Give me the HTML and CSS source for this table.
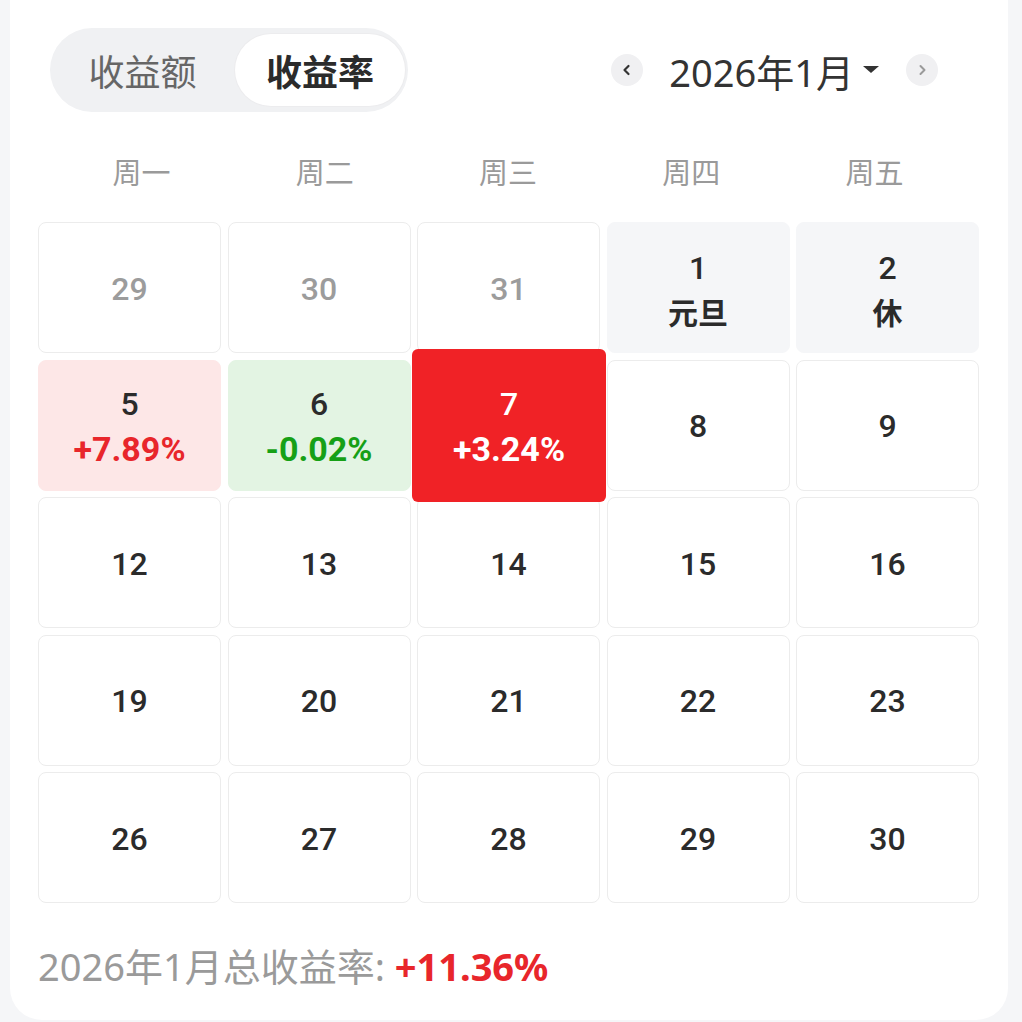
FILE: index.html
```html
<!DOCTYPE html>
<html lang="zh-CN">
<head>
<meta charset="utf-8">
<title>收益日历</title>
<link rel="stylesheet" href="styles.css">
</head>
<body>
<div class="card">
  <div class="header">
    <div class="toggle">
      <div class="seg">收益额</div>
      <div class="seg active">收益率</div>
    </div>
    <div class="nav">
      <div class="circle">
        <svg width="14" height="14" viewBox="0 0 14 14"><path d="M8.5 3 L4.5 7 L8.5 11" fill="none" stroke="#333" stroke-width="2.2" stroke-linecap="round" stroke-linejoin="round"/></svg>
      </div>
      <div class="title">2026年1月</div>
      <svg class="caret" width="16" height="8" viewBox="0 0 16 8"><path d="M0 0 H16 L8 7 Z" fill="#333"/></svg>
      <div class="circle next">
        <svg width="14" height="14" viewBox="0 0 14 14"><path d="M5.5 3 L9.5 7 L5.5 11" fill="none" stroke="#9a9a9a" stroke-width="2" stroke-linecap="round" stroke-linejoin="round"/></svg>
      </div>
    </div>
  </div>

  <div class="weekdays">
    <div>周一</div><div>周二</div><div>周三</div><div>周四</div><div>周五</div>
  </div>

  <div class="grid">
    <div class="cell muted"><span class="d">29</span></div>
    <div class="cell muted"><span class="d">30</span></div>
    <div class="cell muted"><span class="d">31</span></div>
    <div class="cell holiday"><span class="d">1</span><span class="sub">元旦</span></div>
    <div class="cell holiday"><span class="d">2</span><span class="sub">休</span></div>

    <div class="cell up"><span class="d">5</span><span class="pct red">+7.89%</span></div>
    <div class="cell down"><span class="d">6</span><span class="pct green">-0.02%</span></div>
    <div class="cell selected">
      <div class="hl"><span class="d">7</span><span class="pct">+3.24%</span></div>
    </div>
    <div class="cell"><span class="d">8</span></div>
    <div class="cell"><span class="d">9</span></div>

    <div class="cell"><span class="d">12</span></div>
    <div class="cell"><span class="d">13</span></div>
    <div class="cell"><span class="d">14</span></div>
    <div class="cell"><span class="d">15</span></div>
    <div class="cell"><span class="d">16</span></div>

    <div class="cell"><span class="d">19</span></div>
    <div class="cell"><span class="d">20</span></div>
    <div class="cell"><span class="d">21</span></div>
    <div class="cell"><span class="d">22</span></div>
    <div class="cell"><span class="d">23</span></div>

    <div class="cell"><span class="d">26</span></div>
    <div class="cell"><span class="d">27</span></div>
    <div class="cell"><span class="d">28</span></div>
    <div class="cell"><span class="d">29</span></div>
    <div class="cell"><span class="d">30</span></div>
  </div>

  <div class="footer">2026年1月总收益率: <span class="total">+11.36%</span></div>
</div>
</body>
</html>
```

FILE: styles.css
```css
html, body {
  margin: 0;
  padding: 0;
  background: #f5f6f8;
}
body {
  font-family: Roboto, "Noto Sans CJK SC", sans-serif;
  color: #333;
}
.card {
  background: #fff;
  margin: 0 14px 0 10px;
  padding: 28px 29px 29px 28px;
  border-radius: 0 0 32px 32px;
}
.header {
  display: flex;
  align-items: center;
  justify-content: space-between;
  padding: 0 41px 0 12px;
}
.toggle {
  display: flex;
  align-items: center;
  background: #f0f1f3;
  border-radius: 42px;
  padding: 6px 3px 6px 0;
  height: 72px;
}
.seg {
  height: 72px;
  display: flex;
  align-items: center;
  justify-content: center;
  font-family: "Noto Sans CJK SC", sans-serif;
  font-size: 36px;
  color: #666;
  width: 185px;
}
.seg.active {
  width: 170px;
  background: #fff;
  border-radius: 37px;
  color: #2b2b2b;
  font-weight: 700;
  box-shadow: 0 0 0 1px #ececee;
}
.nav {
  display: flex;
  align-items: center;
}
.circle {
  width: 32px;
  height: 32px;
  border-radius: 50%;
  background: #f0f0f2;
  display: flex;
  align-items: center;
  justify-content: center;
}
.title {
  margin-left: 26px;
  font-size: 38px;
  color: #333;
  font-family: "Noto Sans", "Noto Sans CJK SC", sans-serif;
}
.caret {
  margin-left: 9px;
}
.next {
  margin-left: 27px;
}
.weekdays {
  display: grid;
  grid-template-columns: repeat(5, 1fr);
  padding: 0 13px 0 12px;
  margin-top: 37px;
  line-height: 44px;
  text-align: center;
  font-family: "Noto Sans CJK SC", sans-serif;
  font-size: 29px;
  color: #9a9a9a;
}
.grid {
  margin-top: 29px;
  display: grid;
  grid-template-columns: repeat(5, 1fr);
  grid-auto-rows: 131px;
  gap: 6.5px;
}
.cell {
  border: 1px solid #ececec;
  border-radius: 8px;
  display: flex;
  flex-direction: column;
  align-items: center;
  justify-content: center;
  padding-top: 3px;
  box-sizing: border-box;
  font-size: 32px;
  font-weight: 500;
  line-height: 45px;
  color: #2b2b2b;
}
.cell.muted { color: #9c9c9c; }
.cell.holiday {
  background: #f5f6f8;
  border-color: #f5f6f8;
}
.sub {
  font-family: "Noto Sans CJK SC", sans-serif;
  font-weight: 700;
  font-size: 30px;
  line-height: 41px;
}
.cell.up {
  background: #fde7e7;
  border-color: #fde7e7;
}
.cell.down {
  background: #e3f4e3;
  border-color: #e3f4e3;
}
.pct { font-weight: 700; font-size: 34px; }
.red { color: #e8262b; }
.green { color: #16a016; }
.cell.selected {
  position: relative;
  border-color: transparent;
}
.hl {
  position: absolute;
  top: -12px;
  bottom: -12px;
  left: -6px;
  right: -7px;
  padding-top: 3px;
  background: #f02226;
  border-radius: 6px;
  color: #fff;
  display: flex;
  flex-direction: column;
  align-items: center;
  justify-content: center;
  z-index: 2;
}
.footer {
  margin-top: 38px;
  line-height: 50px;
  font-family: "Noto Sans", "Noto Sans CJK SC", sans-serif;
  font-size: 38px;
  color: #9a9a9a;
}
.total {
  color: #e8262b;
  font-weight: 700;
}
```
